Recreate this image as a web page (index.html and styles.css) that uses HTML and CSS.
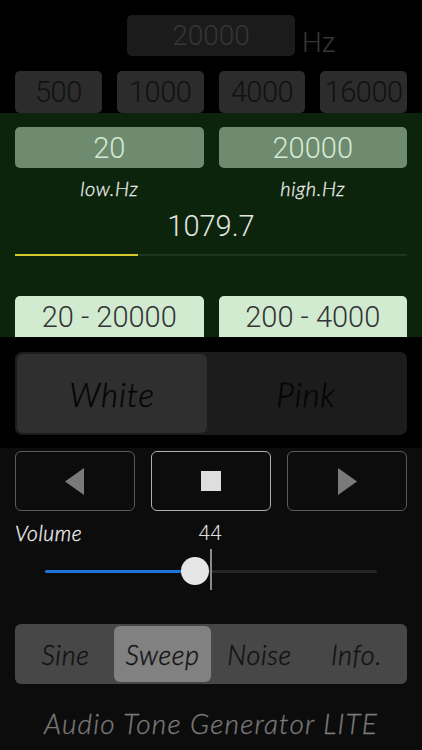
FILE: index.html
```html
<!DOCTYPE html>
<html>
<head>
<meta charset="utf-8">
<link rel="stylesheet" href="styles.css">
</head>
<body>
<div class="top">
  <div class="freq-row">
    <div></div>
    <div class="freq-box">20000</div>
    <div class="hz">Hz</div>
  </div>
  <div class="presets">
    <div class="preset">500</div>
    <div class="preset">1000</div>
    <div class="preset">4000</div>
    <div class="preset">16000</div>
  </div>
</div>
<div class="green">
  <div class="pair">
    <div class="lim">20</div>
    <div class="lim">20000</div>
  </div>
  <div class="labels">
    <div class="lbl">low.Hz</div>
    <div class="lbl">high.Hz</div>
  </div>
  <div class="value">1079.7</div>
  <div class="progress"><div class="progress-fill"></div></div>
  <div class="ranges">
    <div class="range">20 - 20000</div>
    <div class="range">200 - 4000</div>
  </div>
</div>
<div class="mid">
  <div class="segment">
    <div class="seg sel">White</div>
    <div class="seg">Pink</div>
  </div>
</div>
<div class="bottom">
  <div class="transport">
    <div class="tbtn">
      <svg width="20" height="27" viewBox="0 0 20 27"><polygon points="19,0 19,27 0,13.5" fill="#7a7a7a"/></svg>
    </div>
    <div class="tbtn active">
      <svg width="20" height="20" viewBox="0 0 20 20"><rect x="0" y="0" width="20" height="20" fill="#dedede"/></svg>
    </div>
    <div class="tbtn">
      <svg width="20" height="27" viewBox="0 0 20 27"><polygon points="1,0 1,27 20,13.5" fill="#7a7a7a"/></svg>
    </div>
  </div>
  <div class="vol-row">
    <div class="vol-label">Volume</div>
    <div class="vol-value">44</div>
  </div>
  <div class="vol-slider">
    <div class="vol-track">
      <div class="vol-fill"></div>
      <div class="vol-thumb"></div>
      <div class="vol-mark"></div>
    </div>
  </div>
  <div class="tabs">
    <div class="tab">Sine</div>
    <div class="tab sel">Sweep</div>
    <div class="tab">Noise</div>
    <div class="tab">Info.</div>
  </div>
  <div class="footer">Audio Tone Generator LITE</div>
</div>
</body>
</html>
```
FILE: styles.css
```css
html, body {
  margin: 0;
  padding: 0;
  background: #0c0c0c;
}
body {
  width: 422px;
  height: 750px;
  overflow: hidden;
  font-family: Roboto, "Liberation Sans", sans-serif;
}
.top {
  background: #000;
  height: 113px;
  box-sizing: border-box;
  padding: 15px 15px 0;
}
.freq-row {
  display: grid;
  grid-template-columns: 1fr 168px 1fr;
  height: 41px;
}
.freq-box {
  background: #1b1b1b;
  border-radius: 5px;
  color: #363636;
  font-weight: 300;
  font-size: 28px;
  display: flex;
  align-items: center;
  justify-content: center;
}
.hz {
  color: #363636;
  font-weight: 300;
  font-size: 28px;
  align-self: end;
  margin-left: 7px;
  line-height: 30px;
  margin-bottom: -2px;
}
.presets {
  display: flex;
  gap: 15px;
  margin-top: 15px;
}
.preset {
  flex: 1;
  height: 42px;
  background: #2c2c2c;
  border-radius: 5px;
  color: #111;
  font-weight: 300;
  font-size: 29px;
  letter-spacing: -0.5px;
  display: flex;
  align-items: center;
  justify-content: center;
}
.green {
  background: #0b240b;
  height: 224px;
  box-sizing: border-box;
  padding: 14px 15px 0;
  display: flex;
  flex-direction: column;
}
.pair, .labels, .ranges {
  display: flex;
  gap: 15px;
}
.lim {
  flex: 1;
  height: 41px;
  background: #6f8b6f;
  border-radius: 5px;
  color: #d3ead3;
  font-weight: 300;
  font-size: 29px;
  display: flex;
  align-items: center;
  justify-content: center;
}
.labels {
  margin-top: 8px;
  height: 24px;
}
.lbl {
  flex: 1;
  text-align: center;
  font-family: Lato, "Open Sans", sans-serif;
  font-style: italic;
  font-weight: 300;
  font-size: 20px;
  letter-spacing: 0.6px;
  color: #ececec;
  -webkit-text-stroke: 0.3px #ececec;
  line-height: 24px;
}
.value {
  text-align: center;
  color: #e4e4e4;
  font-weight: 300;
  font-size: 29px;
  line-height: 30px;
  margin-top: 11px;
}
.progress {
  margin-top: 13px;
  height: 2px;
  background: #1d361d;
}
.progress-fill {
  width: 123px;
  height: 100%;
  background: #d4c92a;
}
.ranges {
  margin-top: auto;
}
.range {
  flex: 1;
  height: 41px;
  background: #d1ebd1;
  border-radius: 5px 5px 0 0;
  color: #333;
  font-weight: 300;
  font-size: 29px;
  display: flex;
  align-items: center;
  justify-content: center;
}
.mid {
  background: #000;
  height: 111px;
  box-sizing: border-box;
  padding: 15px 15px 0;
}
.segment {
  height: 83px;
  background: #1c1c1c;
  border-radius: 7px;
  box-sizing: border-box;
  padding: 2px;
  display: flex;
}
.seg {
  flex: 1;
  display: flex;
  align-items: center;
  justify-content: center;
  font-family: Lato, "Open Sans", sans-serif;
  font-style: italic;
  font-weight: 300;
  font-size: 33px;
  letter-spacing: 0.8px;
  color: #050505;
  -webkit-text-stroke: 0.4px #050505;
  border-radius: 6px;
}
.seg.sel {
  background: #2f2f2f;
  flex: 0 0 190px;
}
.bottom {
  padding: 3px 15px 0;
}
.transport {
  display: flex;
  gap: 16px;
}
.tbtn {
  flex: 1;
  height: 60px;
  box-sizing: border-box;
  border: 1.5px solid #5a5a5a;
  border-radius: 6px;
  display: flex;
  align-items: center;
  justify-content: center;
}
.tbtn.active {
  border-color: #b0b0b0;
}
.vol-row {
  position: relative;
  height: 26px;
  margin-top: 9px;
}
.vol-label {
  font-family: Lato, "Open Sans", sans-serif;
  font-style: italic;
  font-weight: 300;
  font-size: 21px;
  letter-spacing: 0.6px;
  color: #f2f2f2;
  -webkit-text-stroke: 0.3px #f2f2f2;
  line-height: 26px;
}
.vol-value {
  position: absolute;
  left: 180px;
  top: 0;
  width: 30px;
  text-align: center;
  font-weight: 300;
  font-size: 21px;
  color: #dcdcdc;
  line-height: 26px;
}
.vol-slider {
  height: 40px;
  margin-top: 5px;
  padding: 0 30px;
  display: flex;
  align-items: center;
}
.vol-track {
  position: relative;
  flex: 1;
  height: 3px;
  background: #262626;
  border-radius: 2px;
}
.vol-fill {
  width: 150px;
  height: 100%;
  background: #1e74d6;
  border-radius: 2px;
}
.vol-thumb {
  position: absolute;
  left: 136px;
  top: -13px;
  width: 28px;
  height: 28px;
  border-radius: 50%;
  background: #e6e6e6;
}
.vol-mark {
  position: absolute;
  left: 165px;
  top: -21px;
  width: 2px;
  height: 41px;
  background: #8a8a8a;
}
.tabs {
  margin-top: 33px;
  height: 60px;
  background: #474747;
  border-radius: 6px;
  box-sizing: border-box;
  padding: 2px;
  display: flex;
}
.tab {
  flex: 1;
  display: flex;
  align-items: center;
  justify-content: center;
  font-family: Lato, "Open Sans", sans-serif;
  font-style: italic;
  font-weight: 300;
  font-size: 27px;
  letter-spacing: 0.6px;
  color: #111;
  -webkit-text-stroke: 0.4px #111;
  border-radius: 6px;
}
.tab.sel {
  background: #818181;
}
.footer {
  margin-top: 24px;
  text-align: center;
  font-family: Lato, "Open Sans", sans-serif;
  font-style: italic;
  font-weight: 300;
  font-size: 28px;
  letter-spacing: 1.2px;
  color: #7a7a7a;
  -webkit-text-stroke: 0.3px #7a7a7a;
  line-height: 30px;
}
```
